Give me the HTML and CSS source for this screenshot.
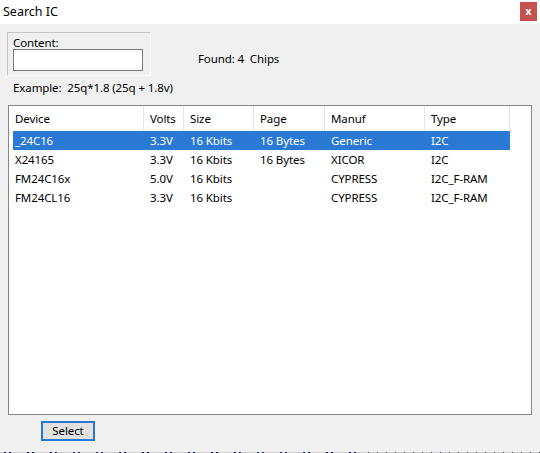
FILE: index.html
```html
<!DOCTYPE html>
<html>
<head>
<meta charset="utf-8">
<link rel="stylesheet" href="styles.css">
</head>
<body>
<div class="window">
  <div class="titlebar">
    <span class="title">Search IC</span>
    <span class="close">x</span>
  </div>
  <div class="top">
    <div class="group">
      <div class="group-label">Content:</div>
      <div class="input"></div>
    </div>
    <div class="found">Found: 4&nbsp; Chips</div>
  </div>
  <div class="example">Example:&nbsp; 25q*1.8 (25q + 1.8v)</div>
  <div class="list">
    <div class="row header">
      <div class="cell">Device</div>
      <div class="cell">Volts</div>
      <div class="cell">Size</div>
      <div class="cell">Page</div>
      <div class="cell">Manuf</div>
      <div class="cell">Type</div>
    </div>
    <div class="row item selected">
      <div class="cell">_24C16</div>
      <div class="cell">3.3V</div>
      <div class="cell">16 Kbits</div>
      <div class="cell">16 Bytes</div>
      <div class="cell">Generic</div>
      <div class="cell">I2C</div>
    </div>
    <div class="row item">
      <div class="cell">X24165</div>
      <div class="cell">3.3V</div>
      <div class="cell">16 Kbits</div>
      <div class="cell">16 Bytes</div>
      <div class="cell">XICOR</div>
      <div class="cell">I2C</div>
    </div>
    <div class="row item">
      <div class="cell">FM24C16x</div>
      <div class="cell">5.0V</div>
      <div class="cell">16 Kbits</div>
      <div class="cell"></div>
      <div class="cell">CYPRESS</div>
      <div class="cell">I2C_F-RAM</div>
    </div>
    <div class="row item">
      <div class="cell">FM24CL16</div>
      <div class="cell">3.3V</div>
      <div class="cell">16 Kbits</div>
      <div class="cell"></div>
      <div class="cell">CYPRESS</div>
      <div class="cell">I2C_F-RAM</div>
    </div>
  </div>
  <div class="footer">
    <div class="button">Select</div>
  </div>
  <div class="edge"></div>
</div>
</body>
</html>
```

FILE: styles.css
```css
html, body {
  margin: 0;
  padding: 0;
}
body {
  width: 540px;
  height: 453px;
  overflow: hidden;
  background: #f0f0f0;
  font-family: "Noto Sans", "Open Sans", sans-serif;
  font-size: 11.5px;
  letter-spacing: -0.1px;
  color: #000;
}
.window {
  display: flex;
  flex-direction: column;
  height: 453px;
}
.titlebar {
  height: 24px;
  background: #fff;
  display: flex;
  align-items: flex-start;
  justify-content: space-between;
}
.title {
  font-size: 12.5px;
  letter-spacing: 0;
  line-height: 24px;
  padding-left: 3px;
}
.close {
  margin-top: 2px;
  margin-right: 3px;
  width: 17px;
  height: 19px;
  background: #c75050;
  color: #fff;
  font-weight: bold;
  font-size: 11px;
  line-height: 18px;
  text-align: center;
}
.top {
  display: flex;
  align-items: flex-start;
  padding: 8px 0 0 7px;
}
.group {
  width: 137px;
  height: 39px;
  border-top: 1px solid #c4c4c4;
  border-left: 1px solid #c4c4c4;
  border-right: 1px solid #fff;
  border-bottom: 1px solid #fff;
  padding: 3px 0 0 5px;
}
.group-label {
  line-height: 13px;
}
.input {
  width: 128px;
  height: 20px;
  background: #fff;
  border: 1px solid #7a7a7a;
}
.found {
  margin-left: 47px;
  margin-top: 20px;
  line-height: 14px;
}
.example {
  padding-left: 13px;
  margin-top: 5px;
  line-height: 14px;
}
.list {
  margin: 10px 0 0 8px;
  width: 522px;
  height: 308px;
  border: 1px solid #828790;
  background: #fff;
}
.row {
  display: grid;
}
.header {
  height: 25px;
  grid-template-columns: 135px 40px 70px 71px 100px 85px;
}
.header .cell {
  border-right: 1px solid #e5e5e5;
  line-height: 25px;
  padding-left: 6px;
}
.item {
  height: 19px;
  margin-left: 4px;
  width: 497px;
  grid-template-columns: 131px 40px 70px 71px 100px 85px;
}
.item .cell {
  line-height: 19px;
  padding-left: 6px;
  white-space: nowrap;
}
.item .cell:first-child {
  padding-left: 2px;
}
.selected {
  background: #2a79d4;
  color: #fff;
}
.footer {
  padding: 6px 0 0 41px;
}
.button {
  width: 50px;
  height: 16px;
  border: 2px solid #2b78d4;
  background: #e1e1e1;
  text-align: center;
  line-height: 16px;
}
.edge {
  margin-top: auto;
  height: 1px;
  background:
    repeating-linear-gradient(90deg, transparent 0 4px, #1a1a6a 4px 6px, transparent 6px 9px, #1a1a6a 9px 11px, transparent 11px 23px) 0 0 / 360px 1px no-repeat,
    repeating-linear-gradient(90deg, transparent 0 8px, #3a2a5a 8px 9px, transparent 9px 9px) 360px 0 / 180px 1px no-repeat,
    #cfcfcf;
}
```
